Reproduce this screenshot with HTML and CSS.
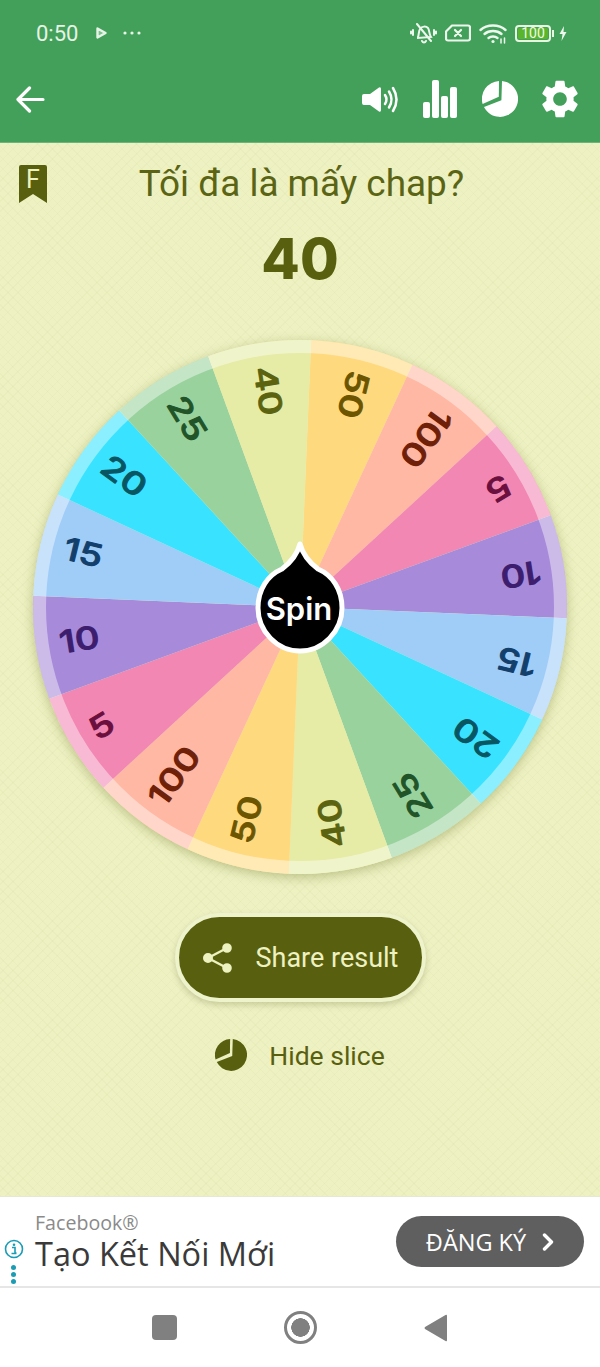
FILE: index.html
```html
<!DOCTYPE html>
<html lang="vi">
<head>
  <meta charset="UTF-8" />
  <meta name="viewport" content="width=device-width, initial-scale=1" />
  <title>Tối đa là mấy chap?</title>
  <link rel="stylesheet" href="styles.css">
</head>
<body>
  <svg class="defs" width="0" height="0">
    <symbol id="pie" viewBox="0 0 36 36">
      <path d="M19.4 19.2 L20 0 A18 18 0 1 1 2 26 Z" fill="currentColor" />
      <path d="M16.8 15.8 L17 0 A18 18 0 0 0 0.6 23 Z" fill="currentColor" />
    </symbol>
  </svg>

  <header class="topbar">
    <div class="status">
      <div class="status-left">
        <span class="time">0:50</span>
        <svg class="play" width="11" height="12" viewBox="0 0 11 12"><path d="M1.5 1.5 L9.5 6 L1.5 10.5 Z" fill="#7cc08c" stroke="#e6f3e6" stroke-width="2.400" stroke-linejoin="round" /></svg>
        <svg width="18" height="4" viewBox="0 0 18 4"><circle cx="2" cy="2" r="1.6" fill="#e6f3e6" /><circle cx="9" cy="2" r="1.6" fill="#e6f3e6" /><circle cx="16" cy="2" r="1.6" fill="#e6f3e6" /></svg>
      </div>
      <div class="status-right">
        <svg width="27" height="21" viewBox="0 0 27 21" fill="none" stroke="#eef7ee" stroke-width="2" stroke-linecap="round">
          <path d="M8 14 C9 12 8.500 8 10 6 C12 3 16 3 18 5 C19.500 7 19 11 21 14 L8 15 Z" />
          <path d="M12 18 C13 20 15 20 16 18" />
          <path d="M7 1 L21 18" />
          <path d="M3 7 L3 12 M1 8.500 L1 10.500 M24 7 L24 12 M26 8.500 L26 10.500" />
        </svg>
        <svg width="26" height="18" viewBox="0 0 26 18" fill="none" stroke="#eef7ee" stroke-width="2.200" stroke-linejoin="round" stroke-linecap="round">
          <path d="M7 1.500 L23 1.500 Q25 1.500 25 3.500 L25 14.500 Q25 16.500 23 16.500 L3 16.500 Q1 16.500 1 14.500 L1 7.500 Z" />
          <path d="M10 6 L16 12 M16 6 L10 12" />
        </svg>
        <svg width="28" height="21" viewBox="0 0 28 21" fill="none" stroke="#eef7ee" stroke-width="2.400" stroke-linecap="round">
          <path d="M1.500 7 C8 1 20 1 26.500 7" />
          <path d="M5.500 11 C10 7 18 7 22.500 11" />
          <path d="M9.500 15 C12 13 16 13 18.500 15" />
          <circle cx="14" cy="18.500" r="1.600" fill="#eef7ee" stroke="none" />
          <path d="M22 16 L22 20 M25.500 15 L25.500 20" stroke-width="1.500" />
        </svg>
        <div class="battery"><span class="battery-level">100</span></div>
        <svg class="bolt" width="8" height="15" viewBox="0 0 8 15"><path d="M5 0 L0.500 8 L3.500 8 L2.500 15 L7.500 6 L4.500 6 Z" fill="#eef7ee" /></svg>
      </div>
    </div>
    <div class="toolbar">
      <svg width="29" height="27" viewBox="0 0 29 27" fill="none" stroke="#fff" stroke-width="3.200" stroke-linecap="round" stroke-linejoin="round">
        <path d="M27 13.500 L3 13.500 M13.500 2 L2 13.500 L13.500 25" />
      </svg>
      <div class="toolbar-icons">
        <svg width="36" height="27" viewBox="0 0 36 27" fill="none" stroke="#fff" stroke-width="2.500" stroke-linecap="round">
          <path d="M0 10 Q0 8 2 8 L8 8 L17 1.500 Q19 0.500 19 3 L19 24 Q19 26.500 17 25.500 L8 19 L2 19 Q0 19 0 17 Z" fill="#fff" stroke="none" />
          <path d="M23 9 Q26 13.500 23 18" />
          <path d="M27 5.500 Q32 13.500 27 21.500" />
          <path d="M31 2 Q38 13.500 31 25" />
        </svg>
        <svg width="34" height="38" viewBox="0 0 34 38" fill="#fff">
          <rect x="0" y="22" width="7" height="16" rx="2" />
          <rect x="9" y="0" width="7" height="38" rx="2" />
          <rect x="18" y="16" width="7" height="22" rx="2" />
          <rect x="27" y="7" width="7" height="31" rx="2" />
        </svg>
        <svg class="pie-top" width="36" height="36"><use href="#pie" /></svg>
        <svg class="gear" width="36" height="38" viewBox="2.500 2 19 20"><path fill="#fff" fill-rule="evenodd" d="M19.140 12.940c.04-.3.06-.61.06-.94 0-.32-.02-.64-.07-.94l2.030-1.580c.18-.14.23-.41.12-.61l-1.920-3.320c-.12-.22-.37-.29-.59-.22l-2.390.96c-.5-.38-1.030-.7-1.620-.94l-.36-2.540c-.04-.24-.24-.41-.48-.41h-3.840c-.24 0-.43.17-.47.41l-.36 2.540c-.59.24-1.130.57-1.620.94l-2.390-.96c-.22-.08-.47 0-.59.22L2.740 8.870c-.12.21-.08.47.12.61l2.030 1.580c-.05.3-.09.63-.09.94s.02.64.07.94l-2.030 1.580c-.18.14-.23.41-.12.61l1.920 3.320c.12.22.37.29.59.22l2.390-.96c.5.38 1.030.7 1.620.94l.36 2.540c.05.24.24.41.48.41h3.840c.24 0 .44-.17.47-.41l.36-2.540c.59-.24 1.130-.56 1.620-.94l2.390.96c.22.08.47 0 .59-.22l1.920-3.320c.12-.22.07-.47-.12-.61l-2.010-1.580zM12 15.600c-1.980 0-3.600-1.620-3.600-3.600s1.620-3.600 3.600-3.600 3.600 1.620 3.600 3.600-1.620 3.600-3.600 3.600z" /></svg>
      </div>
    </div>
  </header>

  <main class="game">
    <div class="title-row">
      <div class="bookmark">
        <svg width="28" height="38" viewBox="0 0 28 38">
          <path d="M2 0 L26 0 Q28 0 28 2 L28 38 L14 29 L0 38 L0 2 Q0 0 2 0 Z" fill="#58600f" />
          <text class="bookmark-letter" x="14" y="23" text-anchor="middle">F</text>
        </svg>
      </div>
      <h1 class="title">Tối đa là mấy chap?</h1>
    </div>
    <div class="result">40</div>

    <div class="wheel">
      <svg id="wheel" width="534" height="534" viewBox="-267 -267 534 534"></svg>
    </div>

    <button class="btn-share">
      <svg width="29" height="30" viewBox="0 0 29 30" fill="#eef1c0" stroke="#eef1c0" stroke-width="2.400">
        <path d="M24 5 L5 15 L24 25" fill="none" />
        <circle cx="24" cy="5" r="3.600" />
        <circle cx="5" cy="15" r="3.800" />
        <circle cx="24" cy="25" r="3.600" />
      </svg>
      <span>Share result</span>
    </button>

    <div class="hide-slice">
      <svg width="32" height="32"><use href="#pie" /></svg>
      <span>Hide slice</span>
    </div>
  </main>

  <section class="ad">
    <div class="ad-info">
      <svg width="20" height="20" viewBox="0 0 20 20">
        <circle cx="10" cy="10" r="8.500" fill="none" stroke="#1a9cb5" stroke-width="1.600" />
        <circle cx="10" cy="5.800" r="1.300" fill="#1a9cb5" />
        <path d="M8 8.500 L11 8.500 L11 14 L12.500 14 M7.500 14.500 L12.500 14.500" fill="none" stroke="#1a9cb5" stroke-width="1.600" />
      </svg>
      <span class="ad-dot"></span>
      <span class="ad-dot"></span>
      <span class="ad-dot"></span>
    </div>
    <div class="ad-text">
      <div class="ad-brand">Facebook®</div>
      <div class="ad-headline">Tạo Kết Nối Mới</div>
    </div>
    <div class="ad-btn">
      <span>ĐĂNG KÝ</span>
      <svg width="12" height="18" viewBox="0 0 12 18" fill="none" stroke="#fff" stroke-width="3.400" stroke-linecap="round" stroke-linejoin="round"><path d="M2.500 2 L9.500 9 L2.500 16" /></svg>
    </div>
  </section>

  <nav class="navbar">
    <span class="nav-square"></span>
    <span class="nav-home"></span>
    <svg width="24" height="28" viewBox="0 0 24 28"><path d="M23 2 Q23 0 21.500 1 L1 13 Q0 14 1 15 L21.500 27 Q23 28 23 26 Z" fill="#808080" /></svg>
  </nav>

  <script src="wheel.js"></script>
</body>
</html>
```

FILE: styles.css
```css
* {
  box-sizing: border-box;
}
body {
  margin: 0;
  width: 600px;
  height: 1367px;
  overflow: hidden;
  font-family: Roboto, Arial, sans-serif;
  background-color: #fff;
}
svg {
  display: block;
  flex: none;
}
.defs {
  position: absolute;
}

.topbar {
  height: 143px;
  background-color: #43a05a;
  border-bottom: 1px solid #6db47a;
}
.status {
  height: 66px;
  padding: 0 33px 0 36px;
  display: flex;
  align-items: center;
  justify-content: space-between;
}
.status-left,
.status-right {
  display: flex;
  align-items: center;
}
.status-left {
  gap: 16px;
}
.status-right {
  gap: 8px;
}
.time {
  font-size: 22px;
  color: #e6f3e6;
  width: 44px;
}
.battery {
  width: 36px;
  height: 17px;
  border: 2px solid #e8f5e0;
  border-radius: 4px;
  padding: 1px;
  display: flex;
  position: relative;
}
.battery::after {
  content: "";
  position: absolute;
  right: -5px;
  top: 3px;
  width: 2px;
  height: 7px;
  background-color: #e8f5e0;
}
.battery-level {
  flex: 1;
  background-color: #5ab52e;
  border-radius: 2px;
  color: #f1f8e0;
  font-size: 14px;
  line-height: 11px;
  text-align: center;
}

.toolbar {
  height: 76px;
  padding: 0 22px 10px 16px;
  display: flex;
  align-items: center;
  justify-content: space-between;
}
.toolbar-icons {
  display: flex;
  align-items: center;
  gap: 25px;
}
.pie-top {
  color: #fff;
}
.gear {
  margin-left: -1px;
}

.game {
  height: 1053px;
  display: flex;
  flex-direction: column;
  align-items: center;
  padding-top: 21px;
  background-color: #eef1c2;
  background-image:
    repeating-linear-gradient(45deg, rgba(125, 135, 50, 0.035) 0 1px, transparent 1px 7px),
    repeating-linear-gradient(-45deg, rgba(125, 135, 50, 0.035) 0 1px, transparent 1px 7px);
}
.title-row {
  width: 100%;
  height: 40px;
  padding-left: 19px;
  display: grid;
  grid-template-columns: 1fr auto 1fr;
  align-items: center;
}
.bookmark-letter {
  font-size: 25px;
  fill: #eef1c0;
}
.title {
  margin: 0;
  font-size: 36.900px;
  font-weight: 400;
  line-height: 40px;
  color: #5a6414;
  white-space: nowrap;
  transform: translateX(-8px);
}
.result {
  margin-top: 24px;
  height: 62px;
  font-family: Inter, Roboto, sans-serif;
  font-size: 56px;
  font-weight: 800;
  line-height: 62px;
  color: #58600f;
}
.wheel {
  margin-top: 50px;
  width: 534px;
  height: 534px;
  border-radius: 50%;
  box-shadow: 0 3px 12px rgba(90, 100, 20, 0.35);
}
.slice-label {
  font-family: Inter, Roboto, sans-serif;
  font-size: 31px;
  font-weight: 500;
  stroke-width: 1;
  stroke-linejoin: round;
}
.spin-label {
  font-family: Inter, Roboto, sans-serif;
  font-size: 31px;
  font-weight: 600;
  fill: #fff;
}

.btn-share {
  margin-top: 39px;
  width: 251px;
  height: 89px;
  padding: 0 0 0 24px;
  display: flex;
  align-items: center;
  gap: 24px;
  background-color: #58600f;
  border: 4px solid #eff3cc;
  border-radius: 45px;
  box-shadow: 0 3px 6px rgba(70, 75, 20, 0.22);
  color: #eef1c0;
  font-family: Roboto, Arial, sans-serif;
  font-size: 27px;
}
.hide-slice {
  margin-top: 33px;
  height: 40px;
  display: flex;
  align-items: center;
  gap: 22px;
  color: #58600f;
  font-size: 26.500px;
}

.ad {
  height: 92px;
  display: flex;
  align-items: center;
  background-color: #fff;
  border-top: 1px solid #e6e8d0;
  border-bottom: 2px solid #e6e6e6;
}
.ad-info {
  width: 35px;
  height: 100%;
  padding-top: 42px;
  display: flex;
  flex-direction: column;
  align-items: center;
  gap: 2px;
  flex: none;
}
.ad-dot {
  width: 5px;
  height: 5px;
  border-radius: 50%;
  background-color: #1a9cb5;
}
.ad-info svg {
  margin-bottom: 4px;
  transform: translateX(-4px);
}
.ad-info .ad-dot {
  transform: translateX(-4px);
}
.ad-text {
  flex: 1;
  font-family: "Open Sans", sans-serif;
}
.ad-brand {
  font-size: 19.600px;
  line-height: 24px;
  color: #8a8a8a;
}
.ad-headline {
  font-size: 32.500px;
  line-height: 38px;
  color: #3a3a3a;
}
.ad-btn {
  width: 188px;
  height: 51px;
  margin-right: 16px;
  display: flex;
  align-items: center;
  justify-content: center;
  gap: 16px;
  background-color: #5f5f5f;
  border-radius: 26px;
  color: #fff;
  font-family: "Open Sans", sans-serif;
  font-size: 23.500px;
}

.navbar {
  height: 79px;
  display: flex;
  align-items: center;
  justify-content: center;
  gap: 107px;
  background-color: #fff;
}
.nav-square {
  width: 25px;
  height: 25px;
  border-radius: 4px;
  background-color: #808080;
}
.nav-home {
  width: 33px;
  height: 33px;
  border: 3px solid #808080;
  border-radius: 50%;
  background: radial-gradient(circle, #808080 0 9px, transparent 9.500px);
}
```

FILE: wheel.js
```js
// slices go clockwise from the top, first boundary sits 2.4deg right of north
const slices = [
  { label: "50", color: "#ffd97e", ink: "#6b5500" },
  { label: "100", color: "#ffb8a3", ink: "#6e2008" },
  { label: "5", color: "#f287b3", ink: "#6a0f3e" },
  { label: "10", color: "#a78bda", ink: "#3c1d6e" },
  { label: "15", color: "#a0cdf8", ink: "#123f6b" },
  { label: "20", color: "#39e3ff", ink: "#0a5562" },
  { label: "25", color: "#9ad29e", ink: "#215428" },
  { label: "40", color: "#e6eca6", ink: "#5b6310" }
];
const START = 2.4;
const STEP = 22.5;
const RADIUS = 267;
const NS = "http://www.w3.org/2000/svg";
const wheel = document.getElementById("wheel");

function point(angle, r) {
  const rad = (angle * Math.PI) / 180;
  return [r * Math.sin(rad), -r * Math.cos(rad)];
}

function add(name, attrs, parent) {
  const el = document.createElementNS(NS, name);
  for (const key in attrs) el.setAttribute(key, attrs[key]);
  (parent || wheel).appendChild(el);
  return el;
}

for (let i = 0; i < 16; i++) {
  const slice = slices[i % 8];
  const from = START + i * STEP;
  const [x1, y1] = point(from, RADIUS);
  const [x2, y2] = point(from + STEP, RADIUS);
  add("path", {
    d: `M0 0 L${x1} ${y1} A${RADIUS} ${RADIUS} 0 0 1 ${x2} ${y2} Z`,
    fill: slice.color
  });
}

// pale ring round the rim
add("circle", { r: 260.5, fill: "none", stroke: "#fff", "stroke-width": 13, "stroke-opacity": 0.42 });

for (let i = 0; i < 16; i++) {
  const slice = slices[i % 8];
  const mid = START + i * STEP + STEP / 2;
  const [x, y] = point(mid, 243);
  const text = add("text", {
    class: "slice-label",
    y: -2,
    transform: `translate(${x} ${y}) rotate(${mid + 90}) scale(1.22 1)`,
    "dominant-baseline": "central",
    fill: slice.ink,
    stroke: slice.ink
  });
  text.textContent = slice.label;
}

// spin button: black drop with white outline
const drop = "M0 -63 C3 -52 10 -44 18 -38 C32 -32 42 -18 42 1 C42 24 23 44 0 44 C-23 44 -42 24 -42 1 C-42 -18 -32 -32 -18 -38 C-10 -44 -3 -52 0 -63 Z";
add("path", { d: drop, fill: "#000", stroke: "#fff", "stroke-width": 5, "stroke-linejoin": "round" });
const spin = add("text", { class: "spin-label", x: -1, y: 1, "text-anchor": "middle", "dominant-baseline": "central" });
spin.textContent = "Spin";
```
